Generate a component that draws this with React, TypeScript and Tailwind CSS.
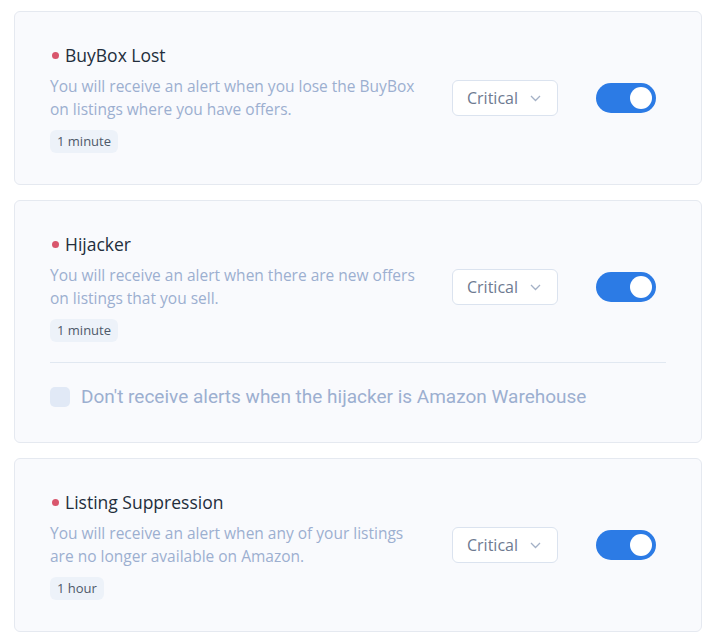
import { useState } from "react";

type Alert = {
  title: string;
  description: string;
  interval: string;
  extra?: string;
};

const alerts: Alert[] = [
  {
    title: "BuyBox Lost",
    description:
      "You will receive an alert when you lose the BuyBox on listings where you have offers.",
    interval: "1 minute",
  },
  {
    title: "Hijacker",
    description:
      "You will receive an alert when there are new offers on listings that you sell.",
    interval: "1 minute",
    extra: "Don't receive alerts when the hijacker is Amazon Warehouse",
  },
  {
    title: "Listing Suppression",
    description:
      "You will receive an alert when any of your listings are no longer available on Amazon.",
    interval: "1 hour",
  },
];

function Toggle({ on, onClick }: { on: boolean; onClick: () => void }) {
  return (
    <button
      onClick={onClick}
      className={
        "flex h-[30px] w-[60px] shrink-0 items-center rounded-full px-[4px] " +
        (on ? "justify-end bg-[#2c7be5]" : "justify-start bg-[#d8e2ef]")
      }
    >
      <span className="h-[22px] w-[22px] rounded-full bg-white" />
    </button>
  );
}

function SeverityButton() {
  return (
    <button className="flex h-[36px] w-[106px] shrink-0 items-center justify-between rounded-md border border-[#dbe3ef] bg-white pl-[14px] pr-[16px] text-[16px] text-[#6e7a91]">
      <span>Critical</span>
      <svg width="11" height="7" viewBox="0 0 11 7" fill="none">
        <path d="M1 1l4.5 4.5L10 1" stroke="#a4b1c6" strokeWidth="1.3" />
      </svg>
    </button>
  );
}

function AlertCard({ alert }: { alert: Alert }) {
  const [on, setOn] = useState(true);
  const [skip, setSkip] = useState(false);

  return (
    <div className="rounded-md border border-[#e5e9f0] bg-[#f9fafd] px-[35px] pt-[31px] pb-[31px]">
      <div className="flex items-center">
        <div className="flex-1">
          <div className="flex items-center text-[17.5px] leading-[24px] text-[#232e3c]">
            <span className="ml-[2px] mr-[6px] h-[7px] w-[7px] rounded-full bg-[#d9566d]" />
            {alert.title}
          </div>
          <p className="mt-[8px] max-w-[374px] text-[15.5px] leading-[23px] text-[#9cafd0]">
            {alert.description}
          </p>
          <span className="mt-[9px] inline-block rounded-md bg-[#edf2f9] px-[7px] text-[13px] leading-[23px] text-[#4d5969]">
            {alert.interval}
          </span>
        </div>
        <div className="flex items-center gap-[38px] pr-[10px]">
          <SeverityButton />
          <Toggle on={on} onClick={() => setOn(!on)} />
        </div>
      </div>

      {alert.extra && (
        <div className="mt-[20px] flex items-center gap-[11px] border-t border-[#e1e8f1] pt-[22px] pb-[2px]">
          <button
            onClick={() => setSkip(!skip)}
            className={
              "h-[20px] w-[20px] rounded-[5px] " +
              (skip ? "bg-[#2c7be5]" : "bg-[#e1e9f6]")
            }
          />
          <span className="font-['Roboto',sans-serif] text-[19px] leading-[24px] text-[#9cafd0]">
            {alert.extra}
          </span>
        </div>
      )}
    </div>
  );
}

export default function App() {
  return (
    <div className="min-h-screen w-[716px] bg-white px-[14px] pt-[11px] font-['Open_Sans','Noto_Sans',sans-serif]">
      <div className="flex flex-col gap-[15px]">
        {alerts.map((a) => (
          <AlertCard key={a.title} alert={a} />
        ))}
      </div>
    </div>
  );
}
